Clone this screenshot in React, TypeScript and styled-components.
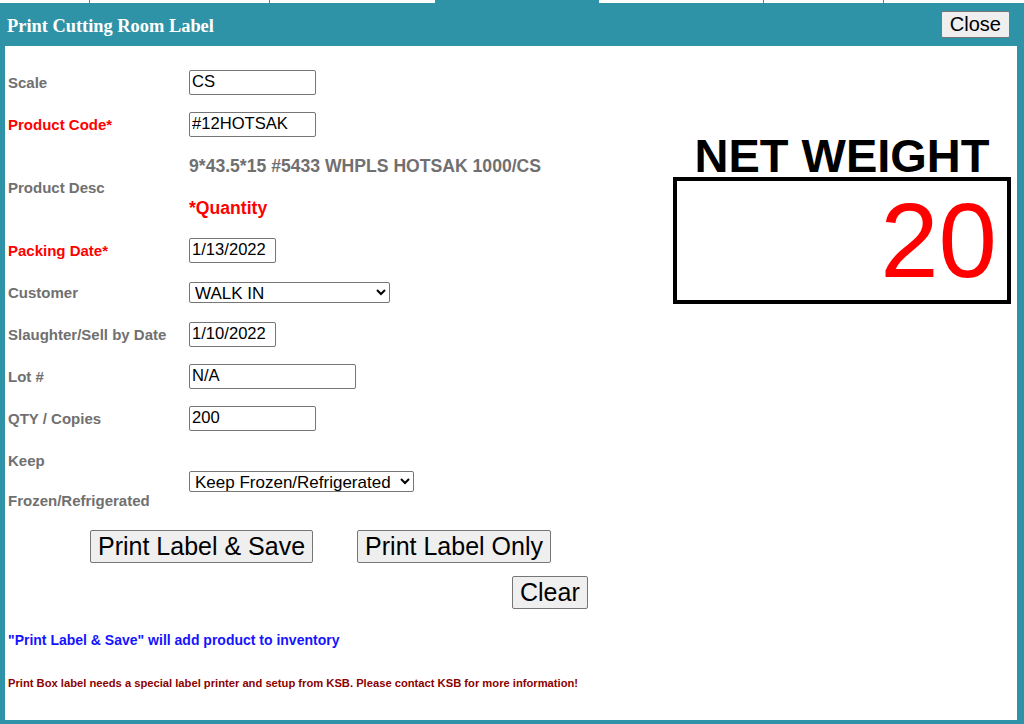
import styled, { createGlobalStyle } from "styled-components";

const GlobalStyle = createGlobalStyle`
  html, body {
    margin: 0;
    padding: 0;
    background: #fff;
    font-family: "Liberation Sans", Arial, sans-serif;
  }
`;

const teal = "#2e93a7";

const tabs = [
  { w: 89 },
  { w: 180 },
  { w: 166 },
  { w: 163, active: true },
  { w: 165 },
  { w: 120 },
  { w: 141 },
];

const Page = () => {
  return (
    <Root>
      <GlobalStyle />
      <TabStrip>
        {tabs.map((t, i) => (
          <Tab key={i} style={{ width: t.w }} active={!!t.active} first={i === 0} />
        ))}
      </TabStrip>
      <Dialog>
        <Header>
          <Title>Print Cutting Room Label</Title>
          <Button size={20} pad={8}>Close</Button>
        </Header>
        <Body>
          <Columns>
            <Form>
              <Row>
                <Label>Scale</Label>
                <Field>
                  <TextInput w={127} defaultValue="CS" />
                </Field>
              </Row>
              <Row>
                <Label required>Product Code*</Label>
                <Field>
                  <TextInput w={127} defaultValue="#12HOTSAK" />
                </Field>
              </Row>
              <Row tall>
                <Label>Product Desc</Label>
                <Field>
                  <SubLine>
                    <Desc>9*43.5*15 #5433 WHPLS HOTSAK 1000/CS</Desc>
                  </SubLine>
                  <SubLine>
                    <Desc required>*Quantity</Desc>
                  </SubLine>
                </Field>
              </Row>
              <Row>
                <Label required>Packing Date*</Label>
                <Field>
                  <TextInput w={87} defaultValue="1/13/2022" />
                </Field>
              </Row>
              <Row>
                <Label>Customer</Label>
                <Field>
                  <Select w={201} defaultValue="WALK IN">
                    <option>WALK IN</option>
                  </Select>
                </Field>
              </Row>
              <Row>
                <Label>Slaughter/Sell by Date</Label>
                <Field>
                  <TextInput w={87} defaultValue="1/10/2022" />
                </Field>
              </Row>
              <Row>
                <Label>Lot #</Label>
                <Field>
                  <TextInput w={167} defaultValue="N/A" />
                </Field>
              </Row>
              <Row>
                <Label>QTY / Copies</Label>
                <Field>
                  <TextInput w={127} defaultValue="200" />
                </Field>
              </Row>
              <Row tall>
                <Label wide>
                  Keep
                  <br />
                  Frozen/Refrigerated
                </Label>
                <Field>
                  <Select w={225} defaultValue="Keep Frozen/Refrigerated">
                    <option>Keep Frozen/Refrigerated</option>
                  </Select>
                </Field>
              </Row>
            </Form>
            <WeightPanel>
              <WeightTitle>NET WEIGHT</WeightTitle>
              <WeightBox>20</WeightBox>
            </WeightPanel>
          </Columns>
          <ButtonRow>
            <Button size={25} pad={7}>Print Label &amp; Save</Button>
            <Button size={25} pad={7}>Print Label Only</Button>
          </ButtonRow>
          <ClearRow>
            <Button size={25} pad={7}>Clear</Button>
          </ClearRow>
          <Note>"Print Label &amp; Save" will add product to inventory</Note>
          <Warning>
            Print Box label needs a special label printer and setup from KSB. Please contact KSB for more information!
          </Warning>
        </Body>
      </Dialog>
    </Root>
  );
};

export default Page;

const Root = styled.div`
  width: 1024px;
  height: 724px;
  overflow: hidden;
  display: flex;
  flex-direction: column;
`;

const TabStrip = styled.div`
  display: flex;
  height: 3px;
`;

const Tab = styled.div<{ active: boolean; first: boolean }>`
  box-sizing: border-box;
  height: 3px;
  background: ${({ active }) => (active ? teal : "#fff")};
  border-left: ${({ first, active }) => (first || active ? "none" : `1px solid ${teal}`)};
`;

const Dialog = styled.div`
  flex: 1;
  display: flex;
  flex-direction: column;
  background: ${teal};
  padding: 0 7px 4px 5px;
`;

const Header = styled.div`
  height: 43px;
  display: flex;
  align-items: center;
  justify-content: space-between;
  margin-right: -8px;
  padding: 0 15px 0 2px;
`;

const Title = styled.div`
  font-family: "Liberation Serif", "Times New Roman", serif;
  font-weight: bold;
  font-size: 18.4px;
  color: #fff;
  padding-top: 3px;
`;

const Button = styled.button<{ size: number; pad: number }>`
  font-family: "Liberation Sans", Arial, sans-serif;
  font-size: ${({ size }) => size}px;
  line-height: ${({ size }) => Math.round(size * 1.15)}px;
  color: #000;
  background: #efefef;
  border: 1px solid #767676;
  border-radius: 2px;
  padding: 1px ${({ pad }) => pad}px;
  margin: 0;
`;

const Body = styled.div`
  flex: 1;
  background: #fff;
  padding: 15px 0 0 3px;
`;

const Columns = styled.div`
  display: flex;
  justify-content: space-between;
`;

const Form = styled.div`
  display: flex;
  flex-direction: column;
`;

const Row = styled.div<{ tall?: boolean }>`
  display: grid;
  grid-template-columns: 181px auto;
  align-items: center;
  height: ${({ tall }) => (tall ? 84 : 42)}px;
`;

const Label = styled.div<{ required?: boolean; wide?: boolean }>`
  font-size: 15px;
  font-weight: bold;
  color: ${({ required }) => (required ? "#ff0000" : "#707070")};
  line-height: ${({ wide }) => (wide ? "40px" : "normal")};
`;

const Field = styled.div`
  display: flex;
  flex-direction: column;
`;

const SubLine = styled.div`
  height: 42px;
  display: flex;
  align-items: center;
`;

const Desc = styled.div<{ required?: boolean }>`
  font-size: 17.6px;
  font-weight: bold;
  color: ${({ required }) => (required ? "#ff0000" : "#707070")};
`;

const TextInput = styled.input<{ w: number }>`
  box-sizing: border-box;
  width: ${({ w }) => w}px;
  height: 25px;
  font-family: "Liberation Sans", Arial, sans-serif;
  font-size: 16.6px;
  color: #000;
  border: 1px solid #767676;
  border-radius: 2px;
  padding: 1px 2px;
  margin: 0;
`;

const Select = styled.select<{ w: number }>`
  box-sizing: border-box;
  width: ${({ w }) => w}px;
  height: 21px;
  font-family: "Liberation Sans", Arial, sans-serif;
  font-size: 17px;
  color: #000;
  background: #fff;
  border: 1px solid #767676;
  border-radius: 2px;
  padding: 0 0 0 1px;
  margin: 0;
`;

const WeightPanel = styled.div`
  width: 338px;
  margin: 73px 6px 0 0;
  display: flex;
  flex-direction: column;
  align-items: center;
`;

const WeightTitle = styled.div`
  font-size: 47px;
  font-weight: bold;
  line-height: 43px;
  color: #000;
`;

const WeightBox = styled.div`
  box-sizing: border-box;
  width: 338px;
  height: 127px;
  border: 4px solid #000;
  text-align: right;
  padding-right: 10px;
  font-size: 105px;
  line-height: 119px;
  color: #ff0000;
`;

const ButtonRow = styled.div`
  display: flex;
  gap: 44px;
  margin: 7px 0 0 82px;
`;

const ClearRow = styled.div`
  display: flex;
  margin: 13px 0 0 504px;
`;

const Note = styled.div`
  font-size: 14px;
  font-weight: bold;
  color: #1414ff;
  margin-top: 24px;
  line-height: 15px;
`;

const Warning = styled.div`
  font-size: 11.2px;
  font-weight: bold;
  color: #8b0000;
  margin-top: 29px;
  line-height: 13px;
`;
